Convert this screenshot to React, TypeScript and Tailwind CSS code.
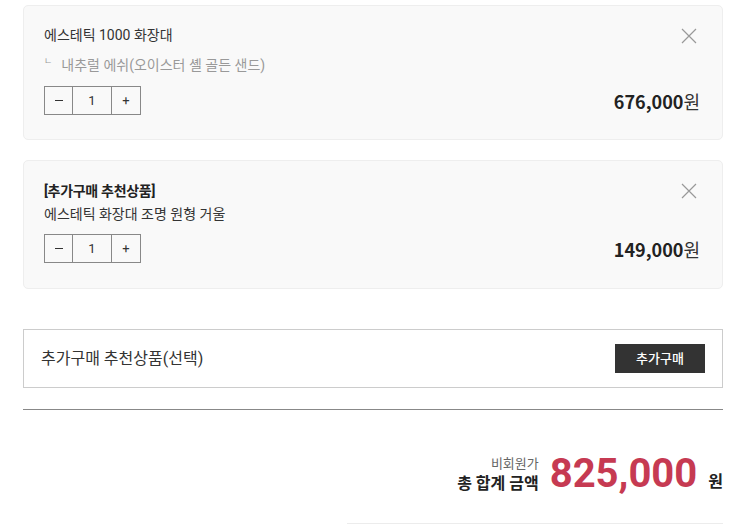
import React from "react"

const font = { fontFamily: "Roboto, 'Noto Sans CJK KR', sans-serif" }

function CloseIcon() {
  return (
    <svg width="16" height="16" viewBox="0 0 16 16" className="absolute top-[22px] right-[25px]">
      <path d="M1 1 L15 15 M15 1 L1 15" stroke="#999" strokeWidth="1.2" fill="none" />
    </svg>
  )
}

function Qty() {
  return (
    <div className="flex h-[29px] border border-[#888] text-[13px] text-[#333]">
      <button className="w-[28px] flex items-center justify-center border-r border-[#888]">
        <span className="block w-[8px] h-[1px] bg-[#333]" />
      </button>
      <div className="w-[39px] flex items-center justify-center border-r border-[#888]">1</div>
      <button className="w-[28px] flex items-center justify-center">+</button>
    </div>
  )
}

function Price({ value }: { value: string }) {
  return (
    <div className="text-[18px] text-[#222] font-['Noto_Sans_CJK_KR'] leading-none">
      <span className="font-bold">{value}</span>
      <span className="font-normal text-[#333]">원</span>
    </div>
  )
}

export default function App() {
  return (
    <div className="bg-white min-h-[525px] pt-[5px] pl-[23px] overflow-hidden" style={font}>
      <div className="w-[700px]">
        <div className="relative bg-[#f9f9f9] border border-[#eeeeee] rounded-[5px] pt-[19px] pl-[20px] pr-[22px] pb-[24px]">
          <CloseIcon />
          <div className="text-[14px] leading-[20px] text-[#333]">에스테틱 1000 화장대</div>
          <div className="mt-[10px] h-[20px] flex items-center text-[14px] leading-[20px] text-[#999]">
            <span className="self-start mt-[2px] text-[9px] leading-none mr-[9px]">ㄴ</span>
            <span>내추럴 에쉬(오이스터 셸 골든 샌드)</span>
          </div>
          <div className="mt-[11px] flex items-center justify-between">
            <Qty />
            <Price value="676,000" />
          </div>
        </div>

        <div className="relative mt-[20px] bg-[#f9f9f9] border border-[#eeeeee] rounded-[5px] pt-[19px] pl-[20px] pr-[22px] pb-[25px]">
          <CloseIcon />
          <div className="text-[14px] leading-[22px] text-[#222] font-bold tracking-[-0.3px]">[추가구매 추천상품]</div>
          <div className="mt-[1px] text-[14px] leading-[22px] text-[#333]">에스테틱 화장대 조명 원형 거울</div>
          <div className="mt-[9px] flex items-center justify-between">
            <Qty />
            <Price value="149,000" />
          </div>
        </div>

        <div className="mt-[40px] h-[59px] border border-[#cccccc] flex items-center justify-between pl-[17px] pr-[17px]">
          <span className="text-[16px] text-[#333]">추가구매 추천상품(선택)</span>
          <button className="w-[90px] h-[29px] bg-[#333] text-white text-[13px] font-medium">추가구매</button>
        </div>

        <div className="mt-[21px] border-t border-[#888]" />

        <div className="pt-[40px] flex justify-end items-end">
          <div className="flex flex-col items-end mb-[3px]">
            <span className="text-[13px] leading-[18px] text-[#666]">비회원가</span>
            <span className="text-[16px] leading-[22px] font-bold text-[#222]">총 합계 금액</span>
          </div>
          <span className="ml-[11px] text-[40px] leading-[48px] font-bold text-[#c63a52]">825,000</span>
          <span className="ml-[11px] mb-[5px] text-[16px] leading-[22px] font-bold text-[#222]">원</span>
        </div>

        <div className="mt-[25px] ml-[324px] border-t border-[#ececec]" />
      </div>
    </div>
  )
}
